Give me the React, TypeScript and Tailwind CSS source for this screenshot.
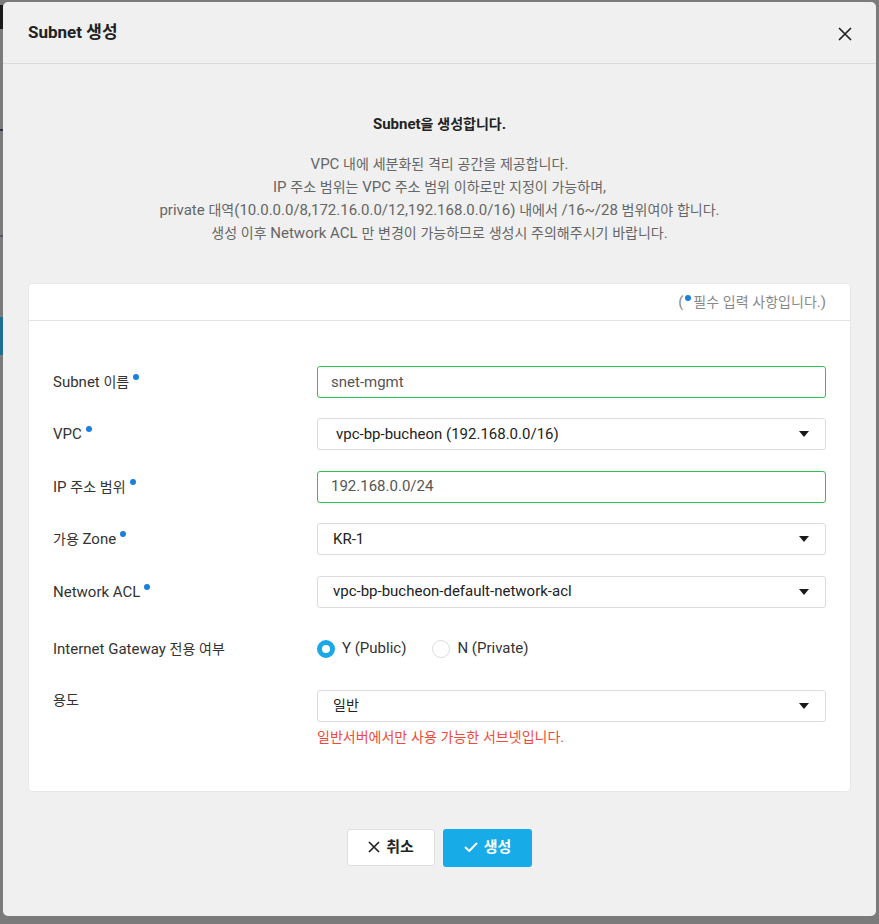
import React from "react";

const FONT = "font-['Roboto','Noto_Sans_CJK_KR',sans-serif]";

function T({ children }: { children: string }) {
  const parts = children.split(/([\uAC00-\uD7A3\u3131-\u318E]+)/);
  return (
    <>
      {parts.map((p, i) =>
        /[\uAC00-\uD7A3\u3131-\u318E]/.test(p) ? (
          <span key={i} className="text-[0.935em]">{p}</span>
        ) : (
          <React.Fragment key={i}>{p}</React.Fragment>
        )
      )}
    </>
  );
}

function Dot() {
  return <span className="inline-block w-[6px] h-[6px] rounded-full bg-[#1b7fdc] ml-[4px] -translate-y-[7px]" />;
}

function Caret() {
  return (
    <svg width="10" height="6" viewBox="0 0 10 6" className="shrink-0">
      <path d="M0 0 L10 0 L5 6 Z" fill="#1a1a1a" />
    </svg>
  );
}

function Row({ label, required = true, children, top = false, h = "min-h-[32px]" }: { label: string; required?: boolean; children: React.ReactNode; top?: boolean; h?: string }) {
  return (
    <div className={`flex ${top ? "items-start" : "items-center"} ${h}`}>
      <div className="w-[264px] shrink-0 text-[15px] text-[#333] leading-[20px]">
        <T>{label}</T>
        {required && <Dot />}
      </div>
      <div className="flex-1">{children}</div>
    </div>
  );
}

function TextInput({ value }: { value: string }) {
  return (
    <div className="h-[32px] border border-[#2ec24e] rounded-[3px] bg-white flex items-center pl-[13px] text-[15px] text-[#555]">
      {value}
    </div>
  );
}

function Select({ value, pl = "pl-[15px]" }: { value: string; pl?: string }) {
  return (
    <div className={`h-[32px] border border-[#dcdcdc] rounded-[3px] bg-white flex items-center justify-between ${pl} pr-[16px] text-[15px] text-[#222]`}>
      <span><T>{value}</T></span>
      <Caret />
    </div>
  );
}

export default function App() {
  return (
    <div className={`w-[879px] h-[924px] bg-[#7b7b7b] flex overflow-hidden ${FONT}`}>
      <div className="w-[3px] shrink-0 flex flex-col">
        <div className="h-[5px]" />
        <div className="h-[24px] bg-[#1a1a1a]" />
        <div className="h-[100px]" />
        <div className="h-[2px] bg-[#334]" />
        <div className="h-[104px]" />
        <div className="h-[2px] bg-[#556]" />
        <div className="h-[80px]" />
        <div className="h-[38px] bg-[#1d6f8f]" />
      </div>
      <div className="mt-[2px] w-[873px] h-[914px] rounded-[5px] bg-[#f0f0f0] flex flex-col shrink-0">
        <div className="h-[62px] border-b border-[#dcdcdc] flex items-center justify-between pl-[25px] pr-[24px]">
          <div className="text-[17px] font-bold text-[#222] pt-[1px]">Subnet 생성</div>
          <svg width="14" height="14" viewBox="0 0 14 14" className="mt-[2px]">
            <path d="M1.5 1.5 L12.5 12.5 M12.5 1.5 L1.5 12.5" stroke="#222" strokeWidth="1.7" strokeLinecap="round" />
          </svg>
        </div>
        <div className="flex flex-col items-center pt-[49px]">
          <div className="text-[15px] font-bold text-[#222] leading-[23px]"><T>Subnet을 생성합니다.</T></div>
          <div className="mt-[17px] text-[15px] text-[#666] leading-[23px] text-center">
            <div><T>VPC 내에 세분화된 격리 공간을 제공합니다.</T></div>
            <div><T>IP 주소 범위는 VPC 주소 범위 이하로만 지정이 가능하며,</T></div>
            <div><T>private 대역(10.0.0.0/8,172.16.0.0/12,192.168.0.0/16) 내에서 /16~/28 범위여야 합니다.</T></div>
            <div><T>생성 이후 Network ACL 만 변경이 가능하므로 생성시 주의해주시기 바랍니다.</T></div>
          </div>
        </div>
        <div className="mx-[25px] mt-[38px] bg-white rounded-[4px] border border-[#e8e8e8]">
          <div className="h-[37px] border-b border-[#e2e2e2] flex items-center justify-end pr-[24px] text-[15px] text-[#888]">
            <span>(</span>
            <span className="inline-block w-[6px] h-[6px] rounded-full bg-[#1b7fdc] mx-[2px] -translate-y-[4px]" />
            <span><T>필수 입력 사항입니다.)</T></span>
          </div>
          <div className="pl-[24px] pr-[24px] pt-[45px] pb-[44px] flex flex-col">
            <Row label="Subnet 이름">
              <TextInput value="snet-mgmt" />
            </Row>
            <div className="h-[20px]" />
            <Row label="VPC">
              <Select value="vpc-bp-bucheon (192.168.0.0/16)" pl="pl-[18px]" />
            </Row>
            <div className="h-[20.5px]" />
            <Row label="IP 주소 범위">
              <TextInput value="192.168.0.0/24" />
            </Row>
            <div className="h-[20.5px]" />
            <Row label="가용 Zone">
              <Select value="KR-1" />
            </Row>
            <div className="h-[20.5px]" />
            <Row label="Network ACL">
              <Select value="vpc-bp-bucheon-default-network-acl" />
            </Row>
            <div className="h-[20px]" />
            <Row label="Internet Gateway 전용 여부" required={false} h="h-[42px]">
              <div className="flex items-center text-[15px] text-[#333]">
                <span className="w-[18px] h-[18px] rounded-full border-[5px] border-[#1aa8e6] bg-white" />
                <span className="ml-[7px]">Y (Public)</span>
                <span className="ml-[26px] w-[18px] h-[18px] rounded-full border border-[#dcdcdc] bg-white" />
                <span className="ml-[7px]">N (Private)</span>
              </div>
            </Row>
            <div className="h-[20px]" />
            <Row label="용도" required={false} top>
              <Select value="일반" />
              <div className="mt-[5px] text-[15px] text-[#ef4a3c] leading-[20px]"><T>일반서버에서만 사용 가능한 서브넷입니다.</T></div>
            </Row>
          </div>
        </div>
        <div className="mt-[37px] flex justify-center gap-[8px]">
          <button className="w-[88px] h-[37px] bg-white border border-[#dedede] rounded-[3px] flex items-center justify-center gap-[6px] text-[16px] font-bold text-[#222]">
            <svg width="12" height="12" viewBox="0 0 12 12">
              <path d="M1 1 L11 11 M11 1 L1 11" stroke="#222" strokeWidth="1.7" />
            </svg>
            <T>취소</T>
          </button>
          <button className="w-[89px] h-[38px] bg-[#17ace8] rounded-[3px] flex items-center justify-center gap-[6px] text-[16px] font-bold text-white">
            <svg width="14" height="11" viewBox="0 0 14 11">
              <path d="M1.5 5.5 L5.2 9 L12.5 1.5" stroke="#fff" strokeWidth="1.9" fill="none" strokeLinecap="round" strokeLinejoin="round" />
            </svg>
            <T>생성</T>
          </button>
        </div>
      </div>
    </div>
  );
}
